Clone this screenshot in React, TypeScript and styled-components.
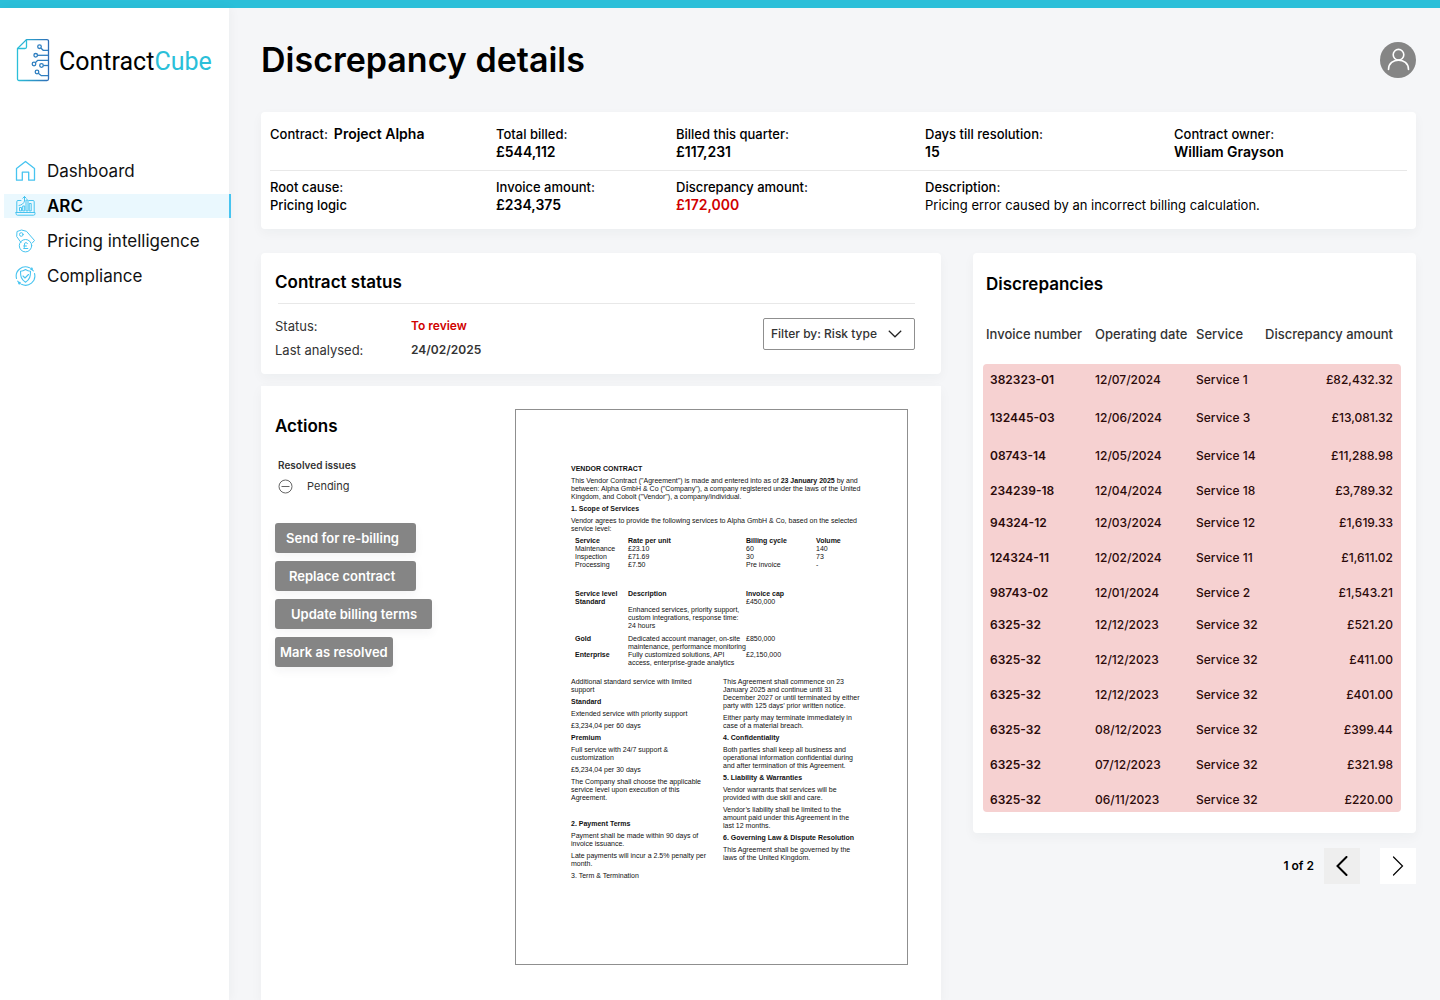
import React from "react";
import styled, { createGlobalStyle, css } from "styled-components";

const GlobalStyle = createGlobalStyle`
  *, *::before, *::after { box-sizing: border-box; }
  body {
    margin: 0;
    background: #f5f6f8;
    color: #000;
    font-family: Inter, "Open Sans", sans-serif;
    font-size: 12px;
    line-height: 18px;
  }
  h1, h2, h3, p, dl, dd, dt, ul { margin: 0; padding: 0; }
  button, select { font: inherit; }
`;

/* ---------- shell ---------- */

const Shell = styled.div`
  display: flex;
  flex-direction: column;
  min-height: 100vh;
  border-top: 8px solid #2bbfd9;
`;

const Body = styled.div`
  display: flex;
  flex: 1;
`;

const Sidebar = styled.aside`
  flex: 0 0 229px;
  background: #fff;
  padding-top: 30px;
  box-shadow: 2px 0 10px rgba(30, 40, 60, 0.04);
`;

const Brand = styled.a`
  display: flex;
  align-items: center;
  gap: 9px;
  height: 44px;
  padding-left: 16px;
  color: #000;
  text-decoration: none;
`;

const BrandName = styled.span`
  padding-top: 4px;
  font-family: Roboto, sans-serif;
  font-size: 25px;
  line-height: 30px;
`;

const BrandAccent = styled.span`
  color: #2bbfd9;
`;

const Nav = styled.nav`
  display: flex;
  flex-direction: column;
  gap: 11px;
  margin: 77px -2px 0 4px;
`;

const NavLink = styled.a<{ $active?: boolean }>`
  display: flex;
  align-items: center;
  gap: 11px;
  height: 24px;
  padding-left: 11px;
  font-size: 17px;
  color: #111;
  text-decoration: none;
  ${(p) =>
    p.$active &&
    css`
      background: #eaf8fe;
      border-right: 2px solid #47c4f0;
      font-weight: 600;
      color: #000;
    `}
`;

const Main = styled.main`
  display: flex;
  flex-direction: column;
  flex: 1;
  min-width: 0;
  padding: 30px 24px 0 32px;
`;

const Header = styled.header`
  display: flex;
  align-items: center;
  justify-content: space-between;
  height: 44px;
  margin-bottom: 30px;
`;

const PageTitle = styled.h1`
  font-size: 34px;
  line-height: 44px;
  font-weight: 600;
`;

const Avatar = styled.button`
  width: 36px;
  height: 36px;
  padding: 0;
  border: 0;
  border-radius: 50%;
  background: #858585;
`;

/* ---------- cards ---------- */

const Card = styled.section`
  background: #fff;
  border-radius: 4px;
  box-shadow: 0 4px 12px rgba(30, 40, 60, 0.04);
`;

const CardTitle = styled.h2`
  font-size: 17px;
  line-height: 24px;
  font-weight: 600;
`;

const Summary = styled(Card)`
  padding: 13px 9px 15px;
  margin-bottom: 24px;
`;

const Facts = styled.dl`
  display: grid;
  grid-template-columns: 226fr 180fr 249fr 249fr 233fr;
  & + & {
    margin-top: 9px;
    padding-top: 7px;
    border-top: 1px solid #e8e8e8;
  }
`;

const Fact = styled.div<{ $inline?: boolean; $wide?: boolean }>`
  ${(p) => p.$inline && "display: flex; gap: 6px;"}
  ${(p) => p.$wide && "grid-column: span 2;"}
`;

const FactLabel = styled.dt`
  font-size: 13px;
  font-weight: 500;
`;

const FactValue = styled.dd<{ $tone?: "plain" | "small" | "alert" }>`
  font-size: ${(p) => (p.$tone === "plain" || p.$tone === "small" ? 13 : 14)}px;
  font-weight: ${(p) => (p.$tone === "plain" ? 400 : p.$tone === "small" ? 500 : 600)};
  color: ${(p) => (p.$tone === "alert" ? "#d00000" : "#000")};
`;

const Columns = styled.div`
  display: grid;
  grid-template-columns: 680fr 443fr;
  gap: 32px;
  flex: 1;
`;

const LeftColumn = styled.div`
  display: flex;
  flex-direction: column;
  gap: 12px;
  min-width: 0;
`;

const StatusCard = styled(Card)`
  padding: 17px 26px 12px 14px;
`;

const Divider = styled.hr`
  height: 1px;
  margin: 9px 0 10px 3px;
  border: 0;
  background: #e8e8e8;
`;

const StatusBody = styled.div`
  display: flex;
  justify-content: space-between;
  align-items: flex-start;
`;

const StatusList = styled.dl`
  display: grid;
  grid-template-columns: 136px auto;
  line-height: 24px;
  color: #333;
`;

const StatusLabel = styled.dt`
  font-size: 13px;
  font-weight: 400;
`;

const StatusValue = styled.dd<{ $alert?: boolean }>`
  font-weight: 600;
  color: ${(p) => (p.$alert ? "#d00000" : "#333")};
`;

const FilterBox = styled.label`
  display: grid;
  align-items: center;
  margin-top: 4px;
  & > * {
    grid-area: 1 / 1;
  }
  & > svg {
    justify-self: end;
    margin-right: 13px;
    pointer-events: none;
  }
`;

const FilterSelect = styled.select`
  appearance: none;
  width: 152px;
  height: 32px;
  padding: 0 32px 0 7px;
  border: 1px solid #8f8f8f;
  border-radius: 2px;
  background: #fff;
  color: #333;
  font-weight: 500;
`;

const ActionsCard = styled(Card)`
  display: flex;
  justify-content: space-between;
  align-items: flex-start;
  flex: 1;
  padding: 23px 33px 35px 14px;
  border-radius: 0;
`;

const ActionsPane = styled.div`
  padding-top: 5px;
`;

const Issues = styled.div`
  padding: 18px 0 0 3px;
  font-size: 11px;
  color: #333;
`;

const IssuesTitle = styled.h3`
  font-size: 10px;
  line-height: 18px;
  font-weight: 600;
`;

const IssueStatus = styled.p`
  display: flex;
  align-items: center;
  gap: 14px;
  height: 24px;
`;

const ButtonStack = styled.div`
  display: flex;
  flex-direction: column;
  align-items: flex-start;
  gap: 8px;
  margin-top: 25px;
`;

const ActionButton = styled.button<{ $width: number; $inset: number }>`
  min-width: ${(p) => p.$width}px;
  height: 30px;
  padding: 0 0 0 ${(p) => p.$inset}px;
  border: 0;
  border-radius: 3px;
  background: #858585;
  box-shadow: 0 4px 10px rgba(30, 40, 60, 0.05);
  color: #fff;
  font-weight: 600;
  font-size: 13px;
  text-align: left;
`;

/* ---------- contract document ---------- */

const Paper = styled.article`
  width: 393px;
  min-height: 556px;
  padding: 55px 40px 0 55px;
  border: 1px solid #8f8f8f;
  background: #fff;
  color: #111;
  font-family: "Liberation Sans", Arial, sans-serif;
  font-size: 7px;
  line-height: 8px;
`;

const Clause = styled.p`
  margin-bottom: 4px;
  white-space: pre;
`;

const ClauseTitle = styled.h3<{ $spaced?: boolean }>`
  margin: ${(p) => (p.$spaced ? 18 : 0)}px 0 4px;
  font-size: 7px;
  line-height: 8px;
  font-weight: 700;
`;

const TermsTable = styled.table`
  width: 100%;
  margin-bottom: 21px;
  padding-left: 4px;
  border-spacing: 0;
  table-layout: fixed;
  th,
  td {
    padding: 0;
    text-align: left;
    vertical-align: top;
    white-space: pre;
  }
  th:nth-child(1) {
    width: 53px;
  }
  th:nth-child(2) {
    width: 118px;
  }
  th:nth-child(3) {
    width: 70px;
  }
`;

const LevelsTable = styled(TermsTable)`
  margin-bottom: 11px;
`;

const PaddedCell = styled.td`
  && {
    padding: 8px 0 5px;
  }
`;

const PaperColumns = styled.div`
  display: grid;
  grid-template-columns: 152px 1fr;
`;

/* ---------- discrepancies ---------- */

const TableCard = styled(Card)`
  padding: 19px 15px 21px 10px;
`;

const TableTitle = styled(CardTitle)`
  padding-left: 3px;
`;

const DataTable = styled.table`
  width: 100%;
  margin-top: 29px;
  border-spacing: 0;
  table-layout: fixed;
  th,
  td {
    padding: 0;
    text-align: left;
    vertical-align: top;
    font-weight: 500;
    white-space: nowrap;
  }
  th:last-child,
  td:last-child {
    padding-right: 8px;
    text-align: right;
  }
`;

const HeadRow = styled.tr`
  height: 39px;
  font-size: 13px;
  color: #333;
  th:first-child {
    padding-left: 3px;
  }
`;

const spacings = { loose: 38, normal: 35, tight: 32, last: 28 };

const DataRow = styled.tr<{ $spacing: keyof typeof spacings }>`
  height: ${(p) => spacings[p.$spacing]}px;
  color: #2b0a0a;
  td {
    padding-top: 7px;
    background: #f6d1d1;
  }
  td:first-child {
    padding-left: 7px;
    font-weight: 600;
  }
  &:first-child td:first-child {
    border-top-left-radius: 4px;
  }
  &:first-child td:last-child {
    border-top-right-radius: 4px;
  }
  &:last-child td:first-child {
    border-bottom-left-radius: 4px;
  }
  &:last-child td:last-child {
    border-bottom-right-radius: 4px;
  }
`;

const Pager = styled.nav`
  display: flex;
  align-items: center;
  justify-content: flex-end;
  gap: 20px;
  margin-top: 15px;
`;

const PagerStatus = styled.span`
  margin-right: -10px;
  font-weight: 600;
`;

const PagerButton = styled.button<{ $muted?: boolean }>`
  display: grid;
  place-items: center;
  width: 36px;
  height: 36px;
  padding: 0;
  border: 0;
  background: ${(p) => (p.$muted ? "#eee" : "#fff")};
`;

/* ---------- icons ---------- */

const line = { fill: "none", stroke: "#47c4f0", strokeWidth: 1, strokeLinejoin: "round", strokeLinecap: "round" } as const;

const LogoMark = () => (
  <svg width="34" height="44" viewBox="0 0 34 44" fill="none" strokeWidth="1.3" aria-hidden="true">
    <defs>
      <linearGradient id="mark" x1="0" y1="0" x2="1" y2="0">
        <stop offset="0" stopColor="#2bbfd9" />
        <stop offset="1" stopColor="#2f6fb7" />
      </linearGradient>
    </defs>
    <path d="M10.5 1.6H31a1.5 1.5 0 0 1 1.5 1.5V41a1.5 1.5 0 0 1-1.5 1.5H3A1.5 1.5 0 0 1 1.500 41V10.500Z" stroke="url(#mark)" />
    <path d="M10.500 1.600V9a1.500 1.500 0 0 1-1.500 1.500H1.500" stroke="#2bbfd9" />
    <g stroke="#2f7fc0">
      <circle cx="23.500" cy="8.700" r="1.800" />
      <path d="M24.800 10l2.400 2.300H32" />
      <circle cx="19.700" cy="17.300" r="1.800" />
      <path d="M21.500 17.300H32" />
      <circle cx="18" cy="26" r="1.800" />
      <path d="M19.300 24.700l2.400-2.400H32" />
      <circle cx="25.500" cy="27.500" r="1.800" />
      <path d="M27.300 27.500H32" />
      <circle cx="21" cy="34" r="1.800" />
      <path d="M22.300 35.300l3 2.400H32" />
    </g>
  </svg>
);

const HomeIcon = () => (
  <svg width="21" height="22" viewBox="0 0 21 22" aria-hidden="true">
    <path {...line} strokeWidth="1.3" d="M1.500 8.500 10.500 1.500l9 7v11.700h-5.800v-8H7.300v8H1.500Z" />
  </svg>
);

const ArcIcon = () => (
  <svg width="21" height="22" viewBox="0 0 21 22" aria-hidden="true">
    <g {...line}>
      <path d="M6 5.500H3A1.200 1.200 0 0 0 1.800 6.700V17M14 5.500h4a1.200 1.200 0 0 1 1.200 1.200V17M1 17.500h19v1.200a1.500 1.500 0 0 1-1.500 1.500h-16A1.500 1.500 0 0 1 1 18.700Z" />
      <path d="M4.500 15.500v-3h2v3ZM7.700 15.500v-4.500h2v4.500ZM11 15.500V5h2v10.500ZM14.200 15.500V8.500h2v7Z" />
      <path d="M4 10.500c2.500-.4 5-2 5.500-4.500V1.500M7.800 3.200l1.700-1.700 1.700 1.700" />
    </g>
  </svg>
);

const PricingIcon = () => (
  <svg width="21" height="24" viewBox="0 0 21 24" aria-hidden="true">
    <g {...line}>
      <path d="M6 13.500 1.700 7.500 2 2.500 6.500 1l5 1.300 8 9.200-2.200 2.500" />
      <circle cx="6.300" cy="5.500" r="1.800" />
      <circle cx="10.500" cy="16.700" r="6.200" />
      <path d="M12.500 14.500c-.4-1.200-3-1.400-3 .5 0 1.500.6 3-.9 4.500h4.200M8.500 17h3" />
    </g>
  </svg>
);

const ComplianceIcon = () => (
  <svg width="21" height="22" viewBox="0 0 21 22" aria-hidden="true">
    <g {...line} strokeWidth="1.100">
      <path d="M1.500 13.500A9.300 9.300 0 0 1 14.500 2.800M19.500 8.500A9.300 9.300 0 0 1 6.500 19.300" />
      <path d="M4.500 18.300 2.700 16.200M16.300 3.800l2 2" />
      <circle cx="4.500" cy="18.200" r=".8" />
      <circle cx="16.500" cy="3.800" r=".8" />
      <path d="M10.500 4.500c1.700 1.200 3.300 1.700 5 1.700 0 5-.5 8.300-5 11-4.500-2.700-5-6-5-11 1.700 0 3.300-.5 5-1.700Z" />
      <path d="m8 11 2 2 3.500-3.500" />
    </g>
  </svg>
);

const PersonIcon = () => (
  <svg width="36" height="36" viewBox="0 0 36 36" fill="none" stroke="#fff" strokeWidth="1.600" strokeLinecap="round" aria-hidden="true">
    <circle cx="18.500" cy="12.700" r="5.300" />
    <path d="M8.500 27.500c0-12.500 20-12.500 20 0" />
  </svg>
);

const ChevronDown = () => (
  <svg width="14" height="8" viewBox="0 0 14 8" fill="none" stroke="#222" strokeWidth="1.200" aria-hidden="true">
    <path d="m.8.8 6.200 6 6.200-6" />
  </svg>
);

const MinusCircle = () => (
  <svg width="15" height="15" viewBox="0 0 15 15" fill="none" stroke="#666" aria-hidden="true">
    <circle cx="7.500" cy="7.500" r="6.500" />
    <path d="M3.500 7.500h8" />
  </svg>
);

const Chevron = ({ back }: { back?: boolean }) => (
  <svg width="12" height="20" viewBox="0 0 12 20" fill="none" stroke="#000" strokeWidth={back ? 2 : 1.2} strokeLinecap="round" aria-hidden="true">
    <path d={back ? "M10.500 1 1.500 10l9 9" : "m1.500 1 9 9-9 9"} />
  </svg>
);

/* ---------- data ---------- */

const navItems = [
  { label: "Dashboard", icon: <HomeIcon /> },
  { label: "ARC", icon: <ArcIcon />, active: true },
  { label: "Pricing intelligence", icon: <PricingIcon /> },
  { label: "Compliance", icon: <ComplianceIcon /> },
];

const actions = [
  { label: "Send for re-billing", width: 141, inset: 11 },
  { label: "Replace contract", width: 141, inset: 14 },
  { label: "Update billing terms", width: 157, inset: 16 },
  { label: "Mark as resolved", width: 118, inset: 5 },
];

type Row = [string, string, string, string, keyof typeof spacings];

const rows: Row[] = [
  ["382323-01", "12/07/2024", "Service 1", "£82,432.32", "loose"],
  ["132445-03", "12/06/2024", "Service 3", "£13,081.32", "loose"],
  ["08743-14", "12/05/2024", "Service 14", "£11,288.98", "normal"],
  ["234239-18", "12/04/2024", "Service 18", "£3,789.32", "tight"],
  ["94324-12", "12/03/2024", "Service 12", "£1,619.33", "normal"],
  ["124324-11", "12/02/2024", "Service 11", "£1,611.02", "normal"],
  ["98743-02", "12/01/2024", "Service 2", "£1,543.21", "tight"],
  ["6325-32", "12/12/2023", "Service 32", "£521.20", "normal"],
  ["6325-32", "12/12/2023", "Service 32", "£411.00", "normal"],
  ["6325-32", "12/12/2023", "Service 32", "£401.00", "normal"],
  ["6325-32", "08/12/2023", "Service 32", "£399.44", "normal"],
  ["6325-32", "07/12/2023", "Service 32", "£321.98", "normal"],
  ["6325-32", "06/11/2023", "Service 32", "£220.00", "last"],
];

const ContractPaper = () => (
  <Paper>
    <ClauseTitle>VENDOR CONTRACT</ClauseTitle>
    <Clause>
      This Vendor Contract ("Agreement") is made and entered into as of <b>23 January 2025</b> by and{"\n"}
      between: Alpha GmbH &amp; Co ("Company"), a company registered under the laws of the United{"\n"}
      Kingdom, and Cobolt ("Vendor"), a company/individual.
    </Clause>
    <ClauseTitle>1. Scope of Services</ClauseTitle>
    <Clause>
      Vendor agrees to provide the following services to Alpha GmbH &amp; Co, based on the selected{"\n"}
      service level:
    </Clause>
    <TermsTable>
      <thead>
        <tr><th>Service</th><th>Rate per unit</th><th>Billing cycle</th><th>Volume</th></tr>
      </thead>
      <tbody>
        <tr><td>Maintenance</td><td>£23.10</td><td>60</td><td>140</td></tr>
        <tr><td>Inspection</td><td>£71.69</td><td>30</td><td>73</td></tr>
        <tr><td>Processing</td><td>£7.50</td><td>Pre invoice</td><td>-</td></tr>
      </tbody>
    </TermsTable>
    <LevelsTable>
      <thead>
        <tr><th>Service level</th><th>Description</th><th>Invoice cap</th><th /></tr>
      </thead>
      <tbody>
        <tr>
          <th>Standard</th>
          <PaddedCell>{"Enhanced services, priority support,\ncustom integrations, response time:\n24 hours"}</PaddedCell>
          <td>£450,000</td>
        </tr>
        <tr>
          <th>Gold</th>
          <td>{"Dedicated account manager, on-site\nmaintenance, performance monitoring"}</td>
          <td>£850,000</td>
        </tr>
        <tr>
          <th>Enterprise</th>
          <td>{"Fully customized solutions, API\naccess, enterprise-grade analytics"}</td>
          <td>£2,150,000</td>
        </tr>
      </tbody>
    </LevelsTable>
    <PaperColumns>
      <div>
        <Clause>{"Additional standard service with limited\nsupport"}</Clause>
        <ClauseTitle>Standard</ClauseTitle>
        <Clause>Extended service with priority support</Clause>
        <Clause>£3,234,04 per 60 days</Clause>
        <ClauseTitle>Premium</ClauseTitle>
        <Clause>{"Full service with 24/7 support &\ncustomization"}</Clause>
        <Clause>£5,234,04 per 30 days</Clause>
        <Clause>{"The Company shall choose the applicable\nservice level upon execution of this\nAgreement."}</Clause>
        <ClauseTitle $spaced>2. Payment Terms</ClauseTitle>
        <Clause>{"Payment shall be made within 90 days of\ninvoice issuance."}</Clause>
        <Clause>{"Late payments will incur a 2.5% penalty per\nmonth."}</Clause>
        <Clause>3. Term &amp; Termination</Clause>
      </div>
      <div>
        <Clause>{"This Agreement shall commence on 23\nJanuary 2025 and continue until 31\nDecember 2027 or until terminated by either\nparty with 125 days’ prior written notice."}</Clause>
        <Clause>{"Either party may terminate immediately in\ncase of a material breach."}</Clause>
        <ClauseTitle>4. Confidentiality</ClauseTitle>
        <Clause>{"Both parties shall keep all business and\noperational information confidential during\nand after termination of this Agreement."}</Clause>
        <ClauseTitle>5. Liability &amp; Warranties</ClauseTitle>
        <Clause>{"Vendor warrants that services will be\nprovided with due skill and care."}</Clause>
        <Clause>{"Vendor’s liability shall be limited to the\namount paid under this Agreement in the\nlast 12 months."}</Clause>
        <ClauseTitle>6. Governing Law &amp; Dispute Resolution</ClauseTitle>
        <Clause>{"This Agreement shall be governed by the\nlaws of the United Kingdom."}</Clause>
      </div>
    </PaperColumns>
  </Paper>
);

export default function App() {
  return (
    <>
      <GlobalStyle />
      <Shell>
        <Body>
          <Sidebar>
            <Brand href="#">
              <LogoMark />
              <BrandName>Contract<BrandAccent>Cube</BrandAccent></BrandName>
            </Brand>
            <Nav>
              {navItems.map((item) => (
                <NavLink key={item.label} href="#" $active={item.active}>
                  {item.icon}
                  {item.label}
                </NavLink>
              ))}
            </Nav>
          </Sidebar>
          <Main>
            <Header>
              <PageTitle>Discrepancy details</PageTitle>
              <Avatar aria-label="Account"><PersonIcon /></Avatar>
            </Header>
            <Summary>
              <Facts>
                <Fact $inline><FactLabel>Contract:</FactLabel><FactValue>Project Alpha</FactValue></Fact>
                <Fact><FactLabel>Total billed:</FactLabel><FactValue>£544,112</FactValue></Fact>
                <Fact><FactLabel>Billed this quarter:</FactLabel><FactValue>£117,231</FactValue></Fact>
                <Fact><FactLabel>Days till resolution:</FactLabel><FactValue>15</FactValue></Fact>
                <Fact><FactLabel>Contract owner:</FactLabel><FactValue>William Grayson</FactValue></Fact>
              </Facts>
              <Facts>
                <Fact><FactLabel>Root cause:</FactLabel><FactValue $tone="small">Pricing logic</FactValue></Fact>
                <Fact><FactLabel>Invoice amount:</FactLabel><FactValue>£234,375</FactValue></Fact>
                <Fact><FactLabel>Discrepancy amount:</FactLabel><FactValue $tone="alert">£172,000</FactValue></Fact>
                <Fact $wide>
                  <FactLabel>Description:</FactLabel>
                  <FactValue $tone="plain">Pricing error caused by an incorrect billing calculation.</FactValue>
                </Fact>
              </Facts>
            </Summary>
            <Columns>
              <LeftColumn>
                <StatusCard>
                  <CardTitle>Contract status</CardTitle>
                  <Divider />
                  <StatusBody>
                    <StatusList>
                      <StatusLabel>Status:</StatusLabel><StatusValue $alert>To review</StatusValue>
                      <StatusLabel>Last analysed:</StatusLabel><StatusValue>24/02/2025</StatusValue>
                    </StatusList>
                    <FilterBox>
                      <FilterSelect aria-label="Filter by">
                        <option>Filter by: Risk type</option>
                      </FilterSelect>
                      <ChevronDown />
                    </FilterBox>
                  </StatusBody>
                </StatusCard>
                <ActionsCard>
                  <ActionsPane>
                    <CardTitle>Actions</CardTitle>
                    <Issues>
                      <IssuesTitle>Resolved issues</IssuesTitle>
                      <IssueStatus><MinusCircle />Pending</IssueStatus>
                    </Issues>
                    <ButtonStack>
                      {actions.map((a) => (
                        <ActionButton key={a.label} $width={a.width} $inset={a.inset}>{a.label}</ActionButton>
                      ))}
                    </ButtonStack>
                  </ActionsPane>
                  <ContractPaper />
                </ActionsCard>
              </LeftColumn>
              <div>
                <TableCard>
                  <TableTitle>Discrepancies</TableTitle>
                  <DataTable>
                    <colgroup>
                      <col style={{ width: 112 }} />
                      <col style={{ width: 101 }} />
                      <col style={{ width: 66 }} />
                      <col />
                    </colgroup>
                    <thead>
                      <HeadRow><th>Invoice number</th><th>Operating date</th><th>Service</th><th>Discrepancy amount</th></HeadRow>
                    </thead>
                    <tbody>
                      {rows.map(([invoice, date, service, amount, spacing], i) => (
                        <DataRow key={i} $spacing={spacing}>
                          <td>{invoice}</td><td>{date}</td><td>{service}</td><td>{amount}</td>
                        </DataRow>
                      ))}
                    </tbody>
                  </DataTable>
                </TableCard>
                <Pager aria-label="Pages">
                  <PagerStatus>1 of 2</PagerStatus>
                  <PagerButton $muted aria-label="Previous page"><Chevron back /></PagerButton>
                  <PagerButton aria-label="Next page"><Chevron /></PagerButton>
                </Pager>
              </div>
            </Columns>
          </Main>
        </Body>
      </Shell>
    </>
  );
}
